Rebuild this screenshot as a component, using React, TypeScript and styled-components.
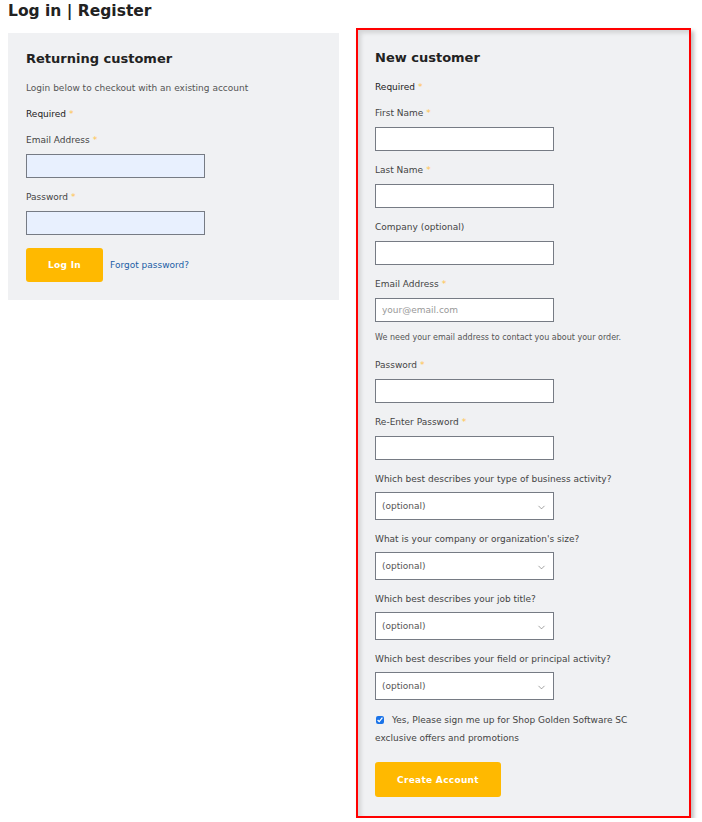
import React from 'react'
import styled, { createGlobalStyle } from 'styled-components'
import { ChevronDown } from 'lucide-react'

const GlobalStyle = createGlobalStyle`
  body {
    margin: 0;
    background: #fff;
    font-family: "DejaVu Sans", Verdana, sans-serif;
    color: #333;
  }
`

const Page = styled.div`
  padding: 0 8px;
`

const Title = styled.h1`
  margin: 0 0 6px;
  font-size: 15.5px;
  line-height: 22px;
  font-weight: bold;
  color: #222;
`

const Columns = styled.div`
  display: flex;
  align-items: flex-start;
  gap: 17px;
`

const Panel = styled.div`
  width: 331px;
  box-sizing: border-box;
  margin-top: 5px;
  padding: 16px 18px 18px;
  background: #f0f1f3;
`

const Highlight = styled.div`
  width: 335px;
  box-sizing: border-box;
  padding: 18px 17px 19px;
  background: #f0f1f3;
  border: 2px solid #ff0000;
  box-shadow: 3px 3px 4px rgba(0, 0, 0, 0.25), inset 3px 3px 4px rgba(0, 0, 0, 0.12);
`

const Heading = styled.h2`
  margin: 0 0 11px;
  font-size: 13px;
  line-height: 20px;
  font-weight: bold;
  color: #222;
`

const Intro = styled.p`
  margin: 0 0 11px;
  padding-top: 1px;
  font-size: 9px;
  line-height: 14px;
  color: #555;
`

const Required = styled.div`
  margin-bottom: 11px;
  padding-top: 1px;
  font-size: 9px;
  line-height: 14px;
  color: #222;
`

const Star = styled.span`
  color: #ffc34d;
  margin-left: 3px;
`

const Field = styled.div`
  margin-bottom: 11px;
`

const Label = styled.label<{ $gap?: number }>`
  display: block;
  margin-bottom: ${p => p.$gap ?? 7}px;
  padding-top: 1px;
  font-size: 9px;
  line-height: 14px;
  color: #444;
`

const TextInput = styled.input<{ $filled?: boolean }>`
  display: block;
  width: 179px;
  height: 24px;
  box-sizing: border-box;
  margin: 0;
  padding: 0 6px;
  border: 1px solid #767b84;
  border-radius: 0;
  background: ${p => (p.$filled ? '#e8f0fe' : '#fff')};
  font-family: inherit;
  font-size: 9px;
  color: #333;
  &::placeholder {
    color: #999;
  }
`

const Help = styled.div`
  margin-top: 10px;
  padding-bottom: 2px;
  font-size: 8px;
  line-height: 12px;
  color: #555;
`

const SelectBox = styled.div`
  position: relative;
  width: 179px;
  height: 28px;
  box-sizing: border-box;
  border: 1px solid #767b84;
  background: #fff;
  display: flex;
  align-items: center;
  padding-left: 6px;
  font-size: 9px;
  color: #555;
  svg {
    position: absolute;
    right: 6px;
    top: 9px;
  }
`

const Actions = styled.div`
  display: flex;
  align-items: center;
  gap: 7px;
  margin-top: 13px;
`

const Button = styled.button`
  height: 34px;
  padding: 0 22px;
  border: 0;
  border-radius: 3px;
  background: #ffb900;
  color: #fff;
  font-family: inherit;
  font-size: 9px;
  font-weight: bold;
  letter-spacing: 0.3px;
  cursor: pointer;
`

const Link = styled.a`
  font-size: 9px;
  color: #1b5ea6;
  text-decoration: none;
`

const Consent = styled.div`
  max-width: 265px;
  margin-bottom: 15px;
  font-size: 9px;
  line-height: 18px;
  color: #444;
  input {
    width: 8px;
    height: 8px;
    margin: 0 8px 0 1px;
    vertical-align: -1px;
    accent-color: #1a73e8;
  }
`

const CreateButton = styled(Button)`
  height: 35px;
`

function Req() {
  return <Star>*</Star>
}

function InputField({ label, required, placeholder, filled, type = 'text' }: {
  label: string
  required?: boolean
  placeholder?: string
  filled?: boolean
  type?: string
}) {
  return (
    <Field>
      <Label>{label}{required && <Req />}</Label>
      <TextInput type={type} placeholder={placeholder} $filled={filled} />
    </Field>
  )
}

function SelectField({ label }: { label: string }) {
  return (
    <Field>
      <Label $gap={6}>{label}</Label>
      <SelectBox>
        (optional)
        <ChevronDown size={11} strokeWidth={1.3} color='#666' />
      </SelectBox>
    </Field>
  )
}

export default function App() {
  return (
    <Page>
      <GlobalStyle />
      <Title>Log in | Register</Title>
      <Columns>
        <Panel>
          <Heading>Returning customer</Heading>
          <Intro>Login below to checkout with an existing account</Intro>
          <Required>Required<Req /></Required>
          <InputField label='Email Address' required filled />
          <InputField label='Password' required filled type='password' />
          <Actions>
            <Button>Log In</Button>
            <Link href='#'>Forgot password?</Link>
          </Actions>
        </Panel>
        <Highlight>
          <Heading>New customer</Heading>
          <Required>Required<Req /></Required>
          <InputField label='First Name' required />
          <InputField label='Last Name' required />
          <InputField label='Company (optional)' />
          <Field>
            <Label>Email Address<Req /></Label>
            <TextInput placeholder='your@email.com' />
            <Help>We need your email address to contact you about your order.</Help>
          </Field>
          <InputField label='Password' required type='password' />
          <InputField label='Re-Enter Password' required type='password' />
          <SelectField label='Which best describes your type of business activity?' />
          <SelectField label="What is your company or organization's size?" />
          <SelectField label='Which best describes your job title?' />
          <SelectField label='Which best describes your field or principal activity?' />
          <Consent>
            <input type='checkbox' defaultChecked />
            Yes, Please sign me up for Shop Golden Software SC exclusive offers and promotions
          </Consent>
          <CreateButton>Create Account</CreateButton>
        </Highlight>
      </Columns>
    </Page>
  )
}
